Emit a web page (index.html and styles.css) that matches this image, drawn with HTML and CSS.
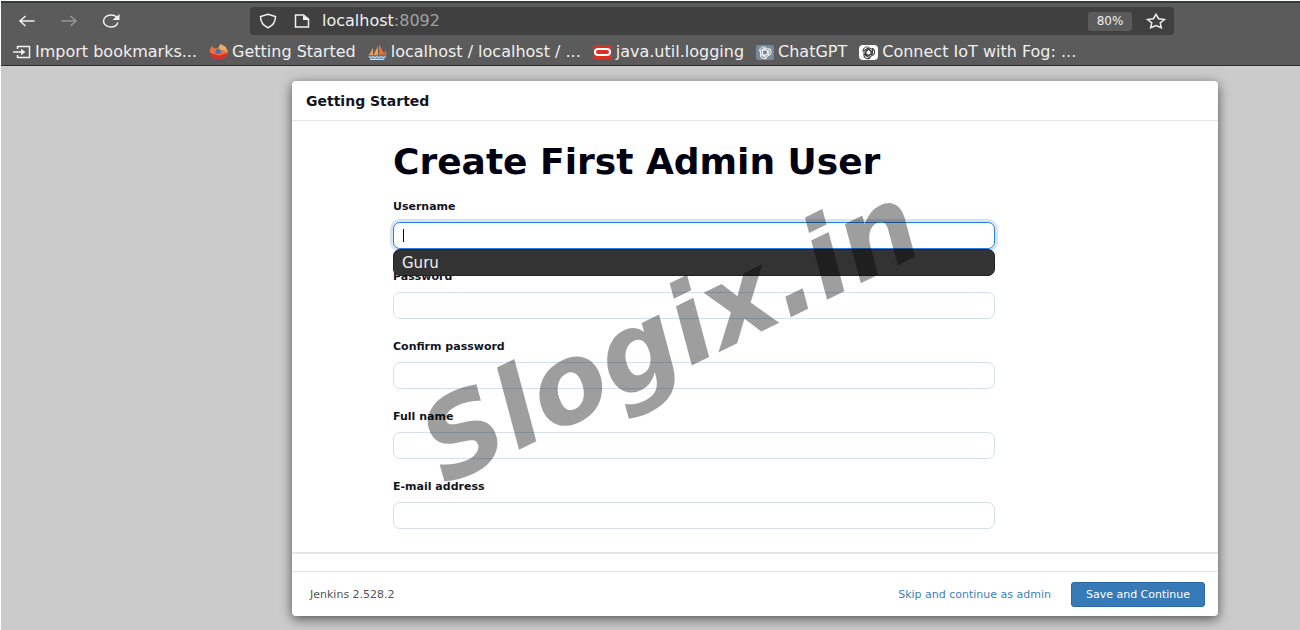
FILE: index.html
```html
<!DOCTYPE html>
<html lang="en">
<head>
  <meta charset="UTF-8" />
  <title>Getting Started - Jenkins</title>
  <link rel="stylesheet" href="styles.css">
</head>
<body>
  <header class="browser">
    <div class="nav-row">
      <div class="nav-buttons">
        <button type="button" aria-label="Back">
          <svg width="18" height="16" viewBox="0 0 18 16"><path d="M16.500 8H2M7.500 3L2 8l5.500 5" /></svg>
        </button>
        <button type="button" aria-label="Forward" disabled>
          <svg width="18" height="16" viewBox="0 0 18 16"><path d="M1.500 8H16M10.500 3L16 8l-5.500 5" /></svg>
        </button>
        <button type="button" aria-label="Reload">
          <svg width="18" height="16" viewBox="0 0 18 16"><path d="M15.800 9.500C15 12.300 12.300 14 9 14 4.800 14 1.500 11.300 1.500 8S4.800 2 9 2c2.500 0 4.700 1 6 2.600" /><path class="solid" d="M17.500 1v6h-7z" /></svg>
        </button>
      </div>
      <div class="url-bar">
        <svg width="18" height="16" viewBox="0 0 18 16"><path d="M9 1.200L16.500 3.500C16.500 9 14 12.500 9 14.800 4 12.500 1.500 9 1.500 3.500z" /></svg>
        <svg class="page-icon" width="16" height="14" viewBox="0 0 16 14"><path d="M1.500 1h8l5 4v8h-13z" /><path class="solid" d="M9 1v5h6z" /></svg>
        <span class="url">localhost<span class="port">:8092</span></span>
        <button type="button" class="zoom">80%</button>
        <button type="button" class="star" aria-label="Bookmark this page">
          <svg width="20" height="16" viewBox="0 0 20 16"><path d="M10 1.300l2.600 4.400 5.900.8-4.300 3.400 1.100 4.800L10 12.500l-5.300 2.200 1.100-4.800L1.500 6.500l5.900-.8z" /></svg>
        </button>
      </div>
    </div>
    <nav class="bookmarks">
      <a href="#">
        <svg width="18" height="14" viewBox="0 0 18 14"><path d="M4.500 4V1.500h12v11h-12V10M0 7h10" /><path class="solid" d="M8 3.800L12.500 7 8 10.200z" /></svg>
        Import bookmarks...
      </a>
      <a href="#">
        <svg width="19" height="16" viewBox="0 0 19 16">
          <g class="art">
            <path fill="#e8743b" d="M.500 6L3 2l2.500 2.500L9 4l3-4 5 3 2 5-1 4-5 2H6L2 11z" />
            <path fill="#dfb06d" d="M11.500 0l5 3 2.500 5-4-1.500-4-1-1.500-2z" />
            <path fill="#d92f2b" d="M.500 8.500L5 10l5 1.500 5-1.500 3.500-1-.500 2.500L13 15l-5 .800L2.500 13z" />
            <path fill="#3a74c2" d="M7 6l2.500-1.500L12 7l-.5 2.500-2 .500L6 9z" />
          </g>
        </svg>
        Getting Started
      </a>
      <a href="#">
        <svg width="19" height="16" viewBox="0 0 19 16">
          <g class="art">
            <path fill="#e7702e" d="M11 0l5.500 10.500L11 11z" />
            <path fill="#eda05c" d="M10 2v9H5.500zM5 4v7H1z" />
            <path fill="#e7702e" d="M17 5l1.500 6h-2z" />
            <path fill="#6f8fae" d="M0 11.500h19l-2 4H2z" />
          </g>
          <path class="waves" d="M1 12.500l2 1.500 2-1.500 2 1.500 2-1.500 2 1.500 2-1.500 2 1.500 2-1.500M2 15.500h14" />
        </svg>
        localhost / localhost / ...
      </a>
      <a href="#">
        <svg width="19" height="14" viewBox="0 0 19 14">
          <rect class="oracle" width="19" height="14" />
          <rect class="ring" x="2" y="4" width="15" height="6" rx="3" />
        </svg>
        java.util.logging
      </a>
      <a href="#">
        <svg class="gpt gpt-blue" width="18" height="15" viewBox="0 0 18 15">
          <rect class="tile" width="18" height="15" rx="2" />
          <g transform="translate(9 7.500)">
            <path id="petal" d="M-5.500-1C-6-5-1-7 1-4.500L4-3V1L.5 3l-3-1.500v-4L1-4.500" />
            <use href="#petal" transform="rotate(120)" />
            <use href="#petal" transform="rotate(240)" />
          </g>
        </svg>
        ChatGPT
      </a>
      <a href="#">
        <svg class="gpt gpt-white" width="19" height="15" viewBox="0 0 19 15">
          <rect class="tile" width="19" height="15" rx="4" />
          <g transform="translate(9.500 7.500)">
            <use href="#petal" />
            <use href="#petal" transform="rotate(120)" />
            <use href="#petal" transform="rotate(240)" />
          </g>
        </svg>
        Connect IoT with Fog: ...
      </a>
    </nav>
  </header>

  <main class="page">
    <form class="modal">
      <div class="modal-header">Getting Started</div>
      <div class="modal-body">
        <h1>Create First Admin User</h1>
        <div class="field active">
          <label for="username">Username</label>
          <input type="text" id="username" name="username" autocomplete="off" />
          <span class="caret"></span>
          <div class="suggestions">Guru</div>
        </div>
        <div class="field">
          <label for="password">Password</label>
          <input type="password" id="password" name="password1" />
        </div>
        <div class="field">
          <label for="confirm">Confirm password</label>
          <input type="password" id="confirm" name="password2" />
        </div>
        <div class="field">
          <label for="fullname">Full name</label>
          <input type="text" id="fullname" name="fullname" />
        </div>
        <div class="field">
          <label for="email">E-mail address</label>
          <input type="email" id="email" name="email" />
        </div>
      </div>
      <div class="divider"></div>
      <div class="modal-footer">
        <span class="version">Jenkins 2.528.2</span>
        <a href="#">Skip and continue as admin</a>
        <button type="submit">Save and Continue</button>
      </div>
      <div class="watermark">Slogix.in</div>
    </form>
  </main>
</body>
</html>
```

FILE: styles.css
```css
* { box-sizing: border-box; }
body {
  margin: 0;
  min-height: 100vh;
  display: flex;
  flex-direction: column;
  border: solid #fff;
  border-width: 1px 0 0 1px;
  font-family: "DejaVu Sans", "Noto Sans", sans-serif;
  background: #cbcbcb;
}
button { font-family: inherit; cursor: pointer; }

/* browser bar */
.browser { background: #5b5b5b; border-top: 2px solid #343a37; border-bottom: 1px solid #2b2b2b; color: #f0f0f0; }
.browser svg { fill: none; stroke: #f0f0f0; stroke-width: 1.5; flex: none; }
.browser .solid { fill: #f0f0f0; stroke: none; }
.browser .art { stroke: none; }
.nav-row { display: flex; padding: 4px 126px 0 17px; }
.nav-buttons { display: flex; align-items: center; gap: 24px; width: 232px; }
.nav-buttons button, .star { display: flex; padding: 0; border: 0; background: none; }
.nav-buttons button:disabled { opacity: 0.4; }
.url-bar { flex: 1; display: flex; align-items: center; height: 28px; padding: 0 8px 0 9px; border-radius: 4px; background: #404040; }
.page-icon { margin: 0 12px 0 17px; }
.url { flex: 1; font-size: 16px; line-height: 20px; }
.port { color: #a0a0a0; }
.zoom { width: 44px; height: 19px; margin-right: 14px; padding: 0; border: 0; border-radius: 3px; background: #5b5b5b; color: #f0f0f0; font-size: 12px; line-height: 19px; }
.bookmarks { display: flex; gap: 12px; height: 30px; padding: 3px 12px 0; }
.bookmarks a { display: flex; align-items: center; gap: 4px; height: 28px; color: #f0f0f0; font-size: 16px; line-height: 20px; text-decoration: none; white-space: nowrap; }
.browser .waves { stroke: #d5dde4; stroke-width: 1; }
.browser .oracle { fill: #d93025; stroke: none; }
.browser .ring { stroke: #fff; stroke-width: 2; }
.browser .gpt { stroke-width: 1; }
.browser .gpt-blue .tile { fill: #748c99; stroke: none; }
.browser .gpt-white { stroke: #333; }
.browser .gpt-white .tile { fill: #fff; stroke: none; }

/* setup wizard */
.page { padding: 15px 82px 14px 291px; }
.modal { position: relative; background: #fff; border-radius: 4px; box-shadow: 0 3px 12px rgba(0, 0, 0, 0.6); color: #14141f; }
.modal-header { height: 40px; padding: 0 14px; border-bottom: 1px solid #e3e3e3; font-size: 14px; line-height: 40px; font-weight: 600; }
.modal-body { padding: 16px 223px 23px 101px; }
h1 { margin: 0 0 14px; font-size: 36px; line-height: 50px; font-weight: 600; white-space: nowrap; color: #000010; }
.field { position: relative; padding-bottom: 22px; }
.field:last-child { padding-bottom: 0; }
.field label { display: block; height: 21px; font-size: 11px; line-height: 12px; font-weight: 600; }
.field input { display: block; width: 100%; height: 27px; padding: 0 8px; border: 1px solid #d6e0ea; border-radius: 7px; background: #fff; font-size: 14px; outline: 0; }
.active input { border-color: #2a80e0; box-shadow: 0 0 0 3px #d6e4f0; }
.caret { position: absolute; top: 28px; left: 10px; width: 1px; height: 13px; background: #111; }
.suggestions { position: absolute; z-index: 1; top: 48px; left: 0; width: 100%; height: 27px; padding: 0 8px; border: 1px solid #222; border-radius: 7px; background: #333; color: #f0f0f0; font-size: 15px; line-height: 26px; }
.divider { height: 20px; border: solid #e5e5e5; border-width: 2px 0 1px; }
.modal-footer { display: flex; align-items: center; height: 44px; padding: 0 13px 0 18px; font-size: 11px; }
.version { flex: 1; color: #555; }
.modal-footer a { margin-right: 20px; color: #3b7fbd; text-decoration: none; }
.modal-footer button { width: 134px; height: 25px; padding: 0; border: 1px solid #2a69a6; border-radius: 3px; background: #377ab8; color: #fff; font-size: 11px; }
.watermark {
  position: absolute;
  z-index: 2;
  top: 188px;
  left: 109px;
  font: italic bold 110px/130px "DejaVu Sans", sans-serif;
  color: rgba(0, 0, 0, 0.38);
  transform: rotate(-26deg);
  pointer-events: none;
}
```
